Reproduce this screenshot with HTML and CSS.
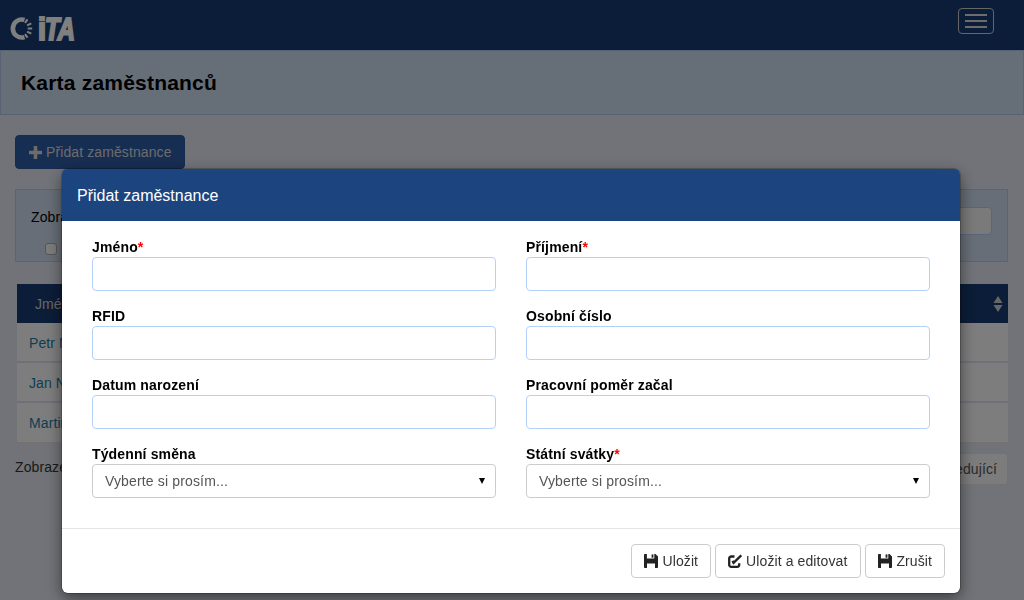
FILE: index.html
```html
<!DOCTYPE html>
<html lang="cs">
<head>
<meta charset="utf-8">
<title>Karta zaměstnanců</title>
<link rel="stylesheet" href="styles.css">
</head>
<body>
<nav class="navbar">
  <svg class="logo" width="68" height="30" viewBox="0 0 68 30" aria-label="ITA logo">
    <g fill="none" stroke="#fff">
      <path d="M15.500 6.900 A9 9 0 1 0 15.500 24.100" stroke-width="4.600"/>
      <path d="M16 9.800 L18.500 6.300 M18.100 12.400 L22.300 10.400 M18.700 15.500 L23.200 15.500 M18.100 18.600 L22.300 20.600 M16 21.200 L18.500 24.700" stroke-width="2.100"/>
    </g>
    <text class="logo-text" y="26.500"><tspan x="29" textLength="8" lengthAdjust="spacingAndGlyphs">i</tspan><tspan class="logo-ta" x="36" textLength="30" lengthAdjust="spacingAndGlyphs">TA</tspan></text>
  </svg>
  <button class="toggle" type="button" aria-label="Menu"><span></span><span></span><span></span></button>
</nav>
<header class="band"><h1>Karta zaměstnanců</h1></header>
<main class="content">
  <button class="add" type="button">
    <svg width="13" height="13" viewBox="0 0 13 13"><path d="M4.700 0h3.600v4.700H13v3.600H8.300V13H4.700V8.300H0V4.700h4.700z" fill="#fff"/></svg>
    Přidat zaměstnance
  </button>
  <section class="filter">
    <div class="filter-main">
      <span>Zobrazit</span>
      <input class="check" type="checkbox">
    </div>
    <input class="search" type="text">
  </section>
  <div class="table">
    <div class="thead"><span>Jméno</span>
      <svg class="sort" width="10" height="16" viewBox="0 0 10 16"><path d="M5 0l4.500 7h-9zM5 16L.5 9h9z"/></svg>
    </div>
    <div class="row"><a>Petr Novák</a></div>
    <div class="row"><a>Jan Novák</a></div>
    <div class="row"><a>Martin</a></div>
  </div>
  <div class="pager">
    <span>Zobrazeno</span>
    <button class="next" type="button">Následující</button>
  </div>
</main>

<div class="backdrop"></div>

<div class="modal">
  <div class="modal-head">Přidat zaměstnance</div>
  <form class="modal-body">
    <div class="field"><label>Jméno<em>*</em></label><input type="text"></div>
    <div class="field"><label>Příjmení<em>*</em></label><input type="text"></div>
    <div class="field"><label>RFID</label><input type="text"></div>
    <div class="field"><label>Osobní číslo</label><input type="text"></div>
    <div class="field"><label>Datum narození</label><input type="text"></div>
    <div class="field"><label>Pracovní poměr začal</label><input type="text"></div>
    <div class="field"><label>Týdenní směna</label><div class="select">Vyberte si prosím...<i></i></div></div>
    <div class="field"><label>Státní svátky<em>*</em></label><div class="select">Vyberte si prosím...<i></i></div></div>
  </form>
  <div class="modal-foot">
    <button type="button"><svg width="14" height="14" viewBox="0 0 14 14"><path fill-rule="evenodd" d="M.8 0H2.900V4.600H10.300V0H11.500L14 2.500V13.200a.8.8 0 0 1-.8.8H.8a.8.8 0 0 1-.8-.8V.8A.8.8 0 0 1 .8 0zM3 9.600V14H11V9.600z" fill="#222"/><path d="M7.600.4H9.400V3.700H7.600z" fill="#222"/></svg>Uložit</button>
    <button class="wide" type="button"><svg width="14" height="14" viewBox="0 0 14 14"><path d="M11.200 9.200V10.800a2 2 0 0 1-2 2H3.200a2 2 0 0 1-2-2V4.500a2 2 0 0 1 2-2H6.500" fill="none" stroke="#222" stroke-width="2.300"/><path d="M4.500 6.800L5.600 8.800 13.300 1.300" fill="none" stroke="#222" stroke-width="2.400"/></svg>Uložit a editovat</button>
    <button type="button"><svg width="14" height="14" viewBox="0 0 14 14"><path fill-rule="evenodd" d="M.8 0H2.900V4.600H10.300V0H11.500L14 2.500V13.200a.8.8 0 0 1-.8.8H.8a.8.8 0 0 1-.8-.8V.8A.8.8 0 0 1 .8 0zM3 9.600V14H11V9.600z" fill="#222"/><path d="M7.600.4H9.400V3.700H7.600z" fill="#222"/></svg>Zrušit</button>
  </div>
</div>
</body>
</html>
```
FILE: styles.css
```css
* { box-sizing: border-box; }
html, body { height: 100%; }
body {
  margin: 0;
  height: 600px;
  overflow: hidden;
  background: #e2e7f0;
  color: #333;
  font: 14px/20px "Liberation Sans", Arial, sans-serif;
  letter-spacing: .1px;
}
button { font: inherit; letter-spacing: inherit; }

.navbar {
  height: 50px;
  background: #173a70;
  display: flex;
  align-items: center;
  justify-content: space-between;
  padding: 0 30px 0 9px;
}
.logo { display: block; margin-top: 6px; overflow: visible; }
.logo-text { font: 900 31px "Liberation Sans", sans-serif; fill: #fff; stroke: #fff; stroke-width: 2.200px; }
.logo-ta { font-style: italic; }
.toggle {
  width: 36px;
  height: 26px;
  margin-top: -8px;
  padding: 0;
  background: transparent;
  border: 1px solid #ccc;
  border-radius: 4px;
  display: flex;
  flex-direction: column;
  align-items: center;
  justify-content: center;
  gap: 4px;
}
.toggle span { width: 22px; height: 2px; background: #d8d8d8; }

.band {
  height: 65px;
  background: #ccdcf0;
  border: 1px solid #afc6ea;
  display: flex;
  align-items: center;
  padding: 0 20px;
}
.band h1 { margin: 0; font-size: 21px; font-weight: 700; color: #000; letter-spacing: .2px; }

.content { padding: 20px 16px 0 15px; }

.add {
  display: flex;
  align-items: center;
  gap: 4px;
  width: 170px;
  height: 34px;
  padding: 0 0 0 13px;
  background: #2f5ca6;
  color: #d8d8d8;
  border: 1px solid #2d579c;
  border-radius: 4px;
}
.add svg path { fill: #d8d8d8; }
.filter {
  margin-top: 20px;
  height: 73px;
  background: #cfdcee;
  border: 1px solid #b4c8ea;
  display: flex;
  justify-content: space-between;
  padding: 17px 15px 0 15px;
}
.filter-main { display: flex; flex-direction: column; gap: 16px; color: #000; }
.check { margin: 0 0 0 14px; width: 12px; height: 12px; appearance: none; background: #f8f8f8; border: 1px solid #aaa; border-radius: 3px; }
.search {
  width: 300px;
  height: 28px;
  background: #f4f4f4;
  border: 1px solid #b3cdf2;
  border-radius: 4px;
}
.table { margin: 22px 0 0 2px; }
.thead {
  height: 39px;
  background: #173a70;
  color: #d0d0d0;
  display: flex;
  align-items: center;
  justify-content: space-between;
  padding: 0 5px 0 18px;
}
.sort path { fill: #cfcfcf; }
.row {
  height: 40px;
  background: #fafafa;
  border-bottom: 2px solid #dbe2ee;
  padding: 10px 12px 0;
}
.row:last-child { border-bottom: 1px solid #e3e3e3; }
.row a { color: #1f7aa8; }

.pager {
  margin-top: 10px;
  display: flex;
  justify-content: space-between;
  align-items: flex-start;
  color: #333;
}
.pager span { padding-top: 4px; }
.next {
  width: 100px;
  height: 32px;
  background: #f8f8f8;
  border: 1px solid #e4e4e4;
  border-radius: 4px;
  color: #555;
  text-align: right;
  padding: 0 10px 0 0;
}

.backdrop {
  position: fixed;
  inset: 0;
  background: rgba(0, 0, 0, .5);
}
.modal {
  position: fixed;
  left: 62px;
  top: 169px;
  width: 898px;
  height: 424px;
  background: #fff;
  border-radius: 6px;
  box-shadow: 0 0 0 1px rgba(0, 0, 0, .2), 0 5px 15px rgba(0, 0, 0, .5);
}
.modal-head {
  height: 52px;
  background: #1c4580;
  border-radius: 5px 5px 0 0;
  color: #fff;
  font-size: 16px;
  letter-spacing: 0;
  line-height: 53px;
  padding: 0 15px;
}
.modal-body {
  display: grid;
  grid-template-columns: 404px 404px;
  column-gap: 30px;
  row-gap: 15px;
  padding: 16px 30px 30px;
}
.field label { display: block; height: 20px; font-weight: 700; color: #000; letter-spacing: .14px; }
.field em { color: #f00; font-style: normal; font-weight: 700; }
.field input {
  display: block;
  width: 100%;
  height: 34px;
  background: #fff;
  border: 1px solid #b3d1fb;
  border-radius: 4px;
  padding: 6px 12px;
}
.select {
  position: relative;
  height: 34px;
  border: 1px solid #ccc;
  border-radius: 4px;
  padding: 6px 12px;
  color: #555;
  letter-spacing: .15px;
}
.select i {
  position: absolute;
  right: 10px;
  top: 13px;
  border-style: solid;
  border-width: 6px 3.500px 0;
  border-color: #000 transparent transparent;
}
.modal-foot {
  border-top: 1px solid #e5e5e5;
  padding: 15px;
  display: flex;
  justify-content: flex-end;
  gap: 4px;
}
.modal-foot button {
  display: flex;
  align-items: center;
  gap: 4px;
  height: 34px;
  padding: 0 12px;
  background: #fff;
  border: 1px solid #ccc;
  border-radius: 4px;
  color: #333;
}
.modal-foot .wide { padding-right: 13px; }
```
